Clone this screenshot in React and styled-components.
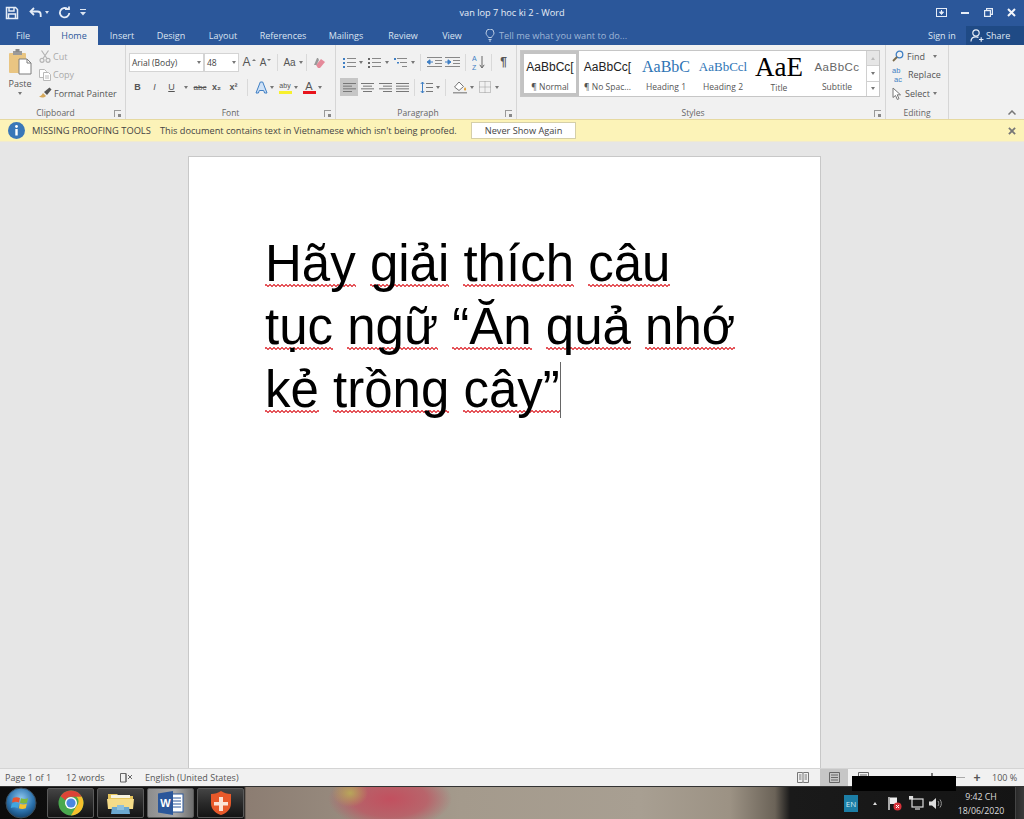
import styled, { createGlobalStyle } from "styled-components";

const UI_FONT = `"Open Sans", "Noto Sans", sans-serif`;

const colors = {
  blue: "#2b579a",
  darkBlue: "#1f4a85",
  ribbon: "#f1f1f1",
  line: "#d6d6d6",
  text: "#555",
  icon: "#6a6a6a",
  canvas: "#e6e6e6",
  bar: "#fcf3b8",
  squiggle: "#e5575c",
};

const GlobalStyle = createGlobalStyle`
  html, body {
    margin: 0;
    padding: 0;
    height: 100%;
    overflow: hidden;
  }
  #root {
    height: 100%;
  }
  * {
    box-sizing: border-box;
  }
`;

const Screen = styled.div`
  position: relative;
  width: 1024px;
  height: 819px;
  display: flex;
  flex-direction: column;
  font-family: ${UI_FONT};
  font-size: 9px;
  color: ${colors.text};
  overflow: hidden;
`;

/* title bar + tabs */
const Head = styled.header`
  background: ${colors.blue};
  color: #dfe7f3;
  height: 45px;
  display: flex;
  flex-direction: column;
  flex: none;
`;

const TitleRow = styled.div`
  height: 25px;
  display: flex;
  align-items: center;
  padding-left: 5px;
`;

const Qat = styled.div`
  display: flex;
  align-items: center;
  width: 447px;
`;

const QatGap = styled.span`
  width: ${(p) => p.$w}px;
  flex: none;
`;

const DocTitle = styled.div`
  width: 120px;
  text-align: center;
  font-size: 9.2px;
  color: #e8eef7;
  white-space: nowrap;
`;

const WinControls = styled.div`
  display: flex;
  align-items: center;
  margin-left: auto;
  margin-right: 1px;
`;

const MinimizeBar = styled.span`
  display: block;
  width: 8px;
  height: 2px;
  background: #e6edf7;
`;

const TabRow = styled.div`
  height: 20px;
  display: flex;
  align-items: flex-end;
  font-size: 9px;
`;

const Tab = styled.div`
  height: 19px;
  width: ${(p) => p.$w}px;
  flex: none;
  padding-right: ${(p) => p.$pr || 0}px;
  display: flex;
  align-items: center;
  justify-content: center;
  color: ${(p) => (p.$active ? colors.blue : "#dbe4f1")};
  background: ${(p) => (p.$active ? colors.ribbon : "transparent")};
`;

const TellMe = styled.div`
  display: flex;
  align-items: center;
  gap: 4px;
  color: #9fb6d6;
  font-size: 9.2px;
  height: 19px;
  margin-left: 11px;
  width: 443px;
`;

const SignIn = styled.div`
  height: 19px;
  width: 38px;
  display: flex;
  align-items: center;
`;

const ShareButton = styled.div`
  height: 19px;
  flex: 1;
  display: flex;
  align-items: center;
  gap: 2px;
  padding-left: 4px;
  background: ${colors.darkBlue};
`;

/* ribbon */
const Ribbon = styled.section`
  height: 74px;
  flex: none;
  display: flex;
  background: ${colors.ribbon};
  position: relative;
`;

const Group = styled.div`
  width: ${(p) => p.$w}px;
  flex: none;
  height: 74px;
  display: flex;
  flex-direction: column;
  border-right: 1px solid ${colors.line};
  position: relative;
`;

const GroupBody = styled.div`
  height: 61px;
  display: flex;
  padding-left: ${(p) => p.$pad || 0}px;
  padding-top: ${(p) => p.$top ?? 3}px;
`;

const GroupLabel = styled.div`
  height: 13px;
  text-align: center;
  line-height: 13px;
  color: #666;
  font-size: 8.5px;
  padding-right: ${(p) => p.$shift || 0}px;
`;

const Launcher = styled.div`
  position: absolute;
  right: 4px;
  bottom: 2px;
  width: 7px;
  height: 7px;
  border-left: 1px solid #999;
  border-top: 1px solid #999;
  &::after {
    content: "";
    position: absolute;
    right: 0;
    bottom: 0;
    width: 3px;
    height: 3px;
    background: #888;
  }
`;

const PasteButton = styled.div`
  width: 36px;
  margin-left: 1px;
  display: flex;
  flex-direction: column;
  align-items: center;
  gap: 2px;
  padding-top: 2px;
`;

const ClipList = styled.div`
  display: flex;
  flex-direction: column;
  padding-left: 1px;
`;

const ClipItem = styled.div`
  height: 18.5px;
  display: flex;
  align-items: center;
  gap: 2px;
  white-space: nowrap;
  color: ${(p) => (p.$off ? "#aaa" : colors.text)};
`;

const ToolStack = styled.div`
  display: flex;
  flex-direction: column;
  gap: 5px;
  padding-top: 4px;
`;

const ToolRow = styled.div`
  height: ${(p) => p.$h || 20}px;
  display: flex;
  align-items: center;
`;

const Tool = styled.div`
  width: ${(p) => p.$w || 17}px;
  height: 18px;
  flex: none;
  display: flex;
  align-items: center;
  justify-content: center;
  background: ${(p) => (p.$on ? "#c6c6c6" : "transparent")};
  color: ${colors.text};
  font-family: "Liberation Sans", sans-serif;
  font-size: ${(p) => p.$size || 9}px;
  font-weight: ${(p) => (p.$bold ? 700 : 400)};
  font-style: ${(p) => (p.$italic ? "italic" : "normal")};
  text-decoration: ${(p) => p.$deco || "none"};
`;

const Tick = styled.i`
  display: block;
  width: 0;
  margin: -5px 0 0 1px;
  border: 2px solid transparent;
  border-top: 0;
  border-bottom: 2.5px solid #777;
  transform: ${(p) => (p.$down ? "rotate(180deg)" : "none")};
`;

const SwatchTool = styled.div`
  width: 16px;
  height: 18px;
  flex: none;
  margin-left: 2px;
  display: flex;
  flex-direction: column;
  align-items: center;
  justify-content: center;
  font-family: "Liberation Sans", sans-serif;
  font-size: ${(p) => p.$size || 11}px;
  line-height: 10px;
  color: #555;
  &::after {
    content: "";
    display: block;
    width: 13px;
    height: 3px;
    background: ${(p) => p.$bar};
  }
`;

const Caret = styled.i`
  display: block;
  width: ${(p) => p.$w || 6}px;
  flex: none;
  height: 3px;
  margin: ${(p) => p.$m || "0"};
  transform: ${(p) => (p.$up ? "rotate(180deg)" : "none")};
  &::before {
    content: "";
    display: block;
    width: 0;
    margin: 0 auto;
    border: 2.5px solid transparent;
    border-bottom: 0;
    border-top: 3px solid ${(p) => p.$color || "#777"};
  }
`;

const Sep = styled.span`
  width: 1px;
  height: 17px;
  flex: none;
  background: #d9d9d9;
  margin: 0 ${(p) => p.$m || 4}px;
`;

const Combo = styled.div`
  width: ${(p) => p.$w}px;
  height: 19px;
  flex: none;
  background: #fff;
  border: 1px solid #d4d4d4;
  margin-right: ${(p) => p.$mr || 0}px;
  display: flex;
  align-items: center;
  justify-content: space-between;
  padding: 0 1px 0 2px;
  font-size: 8.5px;
  color: #444;
`;

const Gallery = styled.div`
  width: 360px;
  height: 47px;
  margin-left: 3px;
  display: flex;
  background: #fff;
  border: 1px solid #c6c6c6;
`;

const StyleCard = styled.div`
  width: ${(p) => p.$w}px;
  flex: none;
  height: 100%;
  display: flex;
  flex-direction: column;
  align-items: center;
  border: ${(p) => (p.$sel ? "3px solid #c3c3c3" : "3px solid transparent")};
`;

const Preview = styled.div`
  height: 27px;
  width: 100%;
  display: flex;
  align-items: center;
  justify-content: center;
  white-space: nowrap;
  font-family: ${(p) => (p.$serif ? `"Liberation Serif", serif` : `"Liberation Sans", sans-serif`)};
  font-size: ${(p) => p.$size}px;
  color: ${(p) => p.$color || "#222"};
  letter-spacing: ${(p) => p.$track || 0}px;
`;

const CardLabel = styled.div`
  font-size: 8.5px;
  line-height: 13px;
  white-space: nowrap;
  color: #555;
`;

const GalleryScroll = styled.div`
  flex: 1;
  display: flex;
  flex-direction: column;
  border-left: 1px solid #d0d0d0;
`;

const ScrollCell = styled.div`
  flex: 1;
  display: flex;
  align-items: center;
  justify-content: center;
  background: ${(p) => (p.$off ? "#e6e6e6" : "#fff")};
  & + & {
    border-top: 1px solid #d0d0d0;
  }
`;

const EditList = styled.div`
  display: flex;
  flex-direction: column;
  padding-left: 6px;
`;

const EditItem = styled.div`
  height: 18.5px;
  display: flex;
  align-items: center;
  gap: ${(p) => p.$gap ?? 3}px;
  white-space: nowrap;
  color: #555;
`;

const CollapseArrow = styled.div`
  position: absolute;
  right: 6px;
  bottom: 4px;
  width: 12px;
  display: flex;
  justify-content: center;
`;

/* message bar */
const MessageBar = styled.div`
  height: 23px;
  flex: none;
  background: ${colors.bar};
  border-top: 1px solid #e6d9a0;
  border-bottom: 1px solid #f0ead0;
  display: flex;
  align-items: center;
  padding-left: 8px;
  color: #444;
  font-size: 9.2px;
  white-space: nowrap;
`;

const BarTitle = styled.span`
  margin-left: 7px;
  width: 128px;
  font-size: 9.3px;
`;

const BarText = styled.span`
  width: 311px;
`;

const BarButton = styled.div`
  width: 105px;
  height: 17px;
  background: #fff;
  border: 1px solid #d5cfa8;
  display: flex;
  align-items: center;
  justify-content: center;
`;

const BarClose = styled.div`
  margin-left: auto;
  margin-right: 8px;
  display: flex;
`;

/* document */
const Canvas = styled.main`
  flex: 1;
  min-height: 0;
  background: ${colors.canvas};
  overflow: hidden;
  padding: 14px 15px 0 0;
  display: flex;
  justify-content: center;
  border-bottom: 1px solid #d4d4d4;
`;

const Page = styled.article`
  width: 633px;
  height: 900px;
  flex: none;
  background: #fff;
  border: 1px solid #c8c8c8;
  padding: 75px 76px 0 76px;
`;

const Body = styled.p`
  margin: 0;
  font-family: "Liberation Sans", Arial, sans-serif;
  font-size: 51px;
  line-height: 63px;
  color: #000;
`;

/* spelling squiggle: zigzag repeated under the word */
const Word = styled.span`
  background-image:
    linear-gradient(45deg, transparent 38%, ${colors.squiggle} 38%, ${colors.squiggle} 62%, transparent 62%),
    linear-gradient(-45deg, transparent 38%, ${colors.squiggle} 38%, ${colors.squiggle} 62%, transparent 62%);
  background-size: 4px 3px;
  background-position: 0 calc(100% - 5px), 2px calc(100% - 5px);
  background-repeat: repeat-x;
`;

const TextCursor = styled.span`
  display: inline-block;
  width: 1px;
  height: 56px;
  background: #666;
  vertical-align: -11px;
`;

/* status bar */
const StatusBar = styled.footer`
  height: 18px;
  flex: none;
  background: ${colors.ribbon};
  display: flex;
  align-items: center;
  padding-left: 5px;
  font-size: 9px;
  color: #555;
  border-bottom: 1px solid #333;
`;

const StatusItem = styled.span`
  width: ${(p) => p.$w}px;
  flex: none;
  white-space: nowrap;
  display: flex;
  align-items: center;
`;

const ViewButtons = styled.div`
  margin-left: auto;
  display: flex;
  align-items: center;
  height: 100%;
`;

const ViewButton = styled.div`
  width: ${(p) => p.$w || 18}px;
  height: 100%;
  display: flex;
  align-items: center;
  justify-content: center;
  background: ${(p) => (p.$on ? "#c6c6c6" : "transparent")};
`;

const Zoom = styled.div`
  display: flex;
  align-items: center;
  margin: 0 9px 0 5px;
`;

const ZoomTrack = styled.div`
  position: relative;
  width: 89px;
  height: 1px;
  background: #aaa;
  margin-right: 6px;
  &::after {
    content: "";
    position: absolute;
    left: 55px;
    top: -4px;
    width: 2px;
    height: 9px;
    background: #777;
  }
`;

const Redaction = styled.div`
  position: absolute;
  left: 852px;
  top: 776px;
  width: 104px;
  height: 15px;
  background: #000;
`;

/* taskbar */
const Taskbar = styled.nav`
  height: 32px;
  flex: none;
  display: flex;
  align-items: center;
  background:
    radial-gradient(ellipse 18px 14px at 350px 6px, #b8a65a 0, transparent 100%),
    radial-gradient(ellipse 62px 30px at 390px 12px, #c2505f 0, rgba(194, 80, 95, 0.7) 60%, transparent 100%),
    linear-gradient(90deg, #0c0c0c 0, #141414 244px, #8c7d72 246px, #a49a8c 460px, #a89f92 640px, #9c9284 730px, #6b6358 775px, #1a1a1a 790px, #141414 100%);
`;

const StartSlot = styled.div`
  width: 47px;
  height: 100%;
  display: flex;
  align-items: center;
  justify-content: center;
  padding-right: 5px;
  flex: none;
`;

const TaskButton = styled.div`
  width: 47px;
  height: 30px;
  flex: none;
  margin-right: 3px;
  border: 1px solid #5a5a5a;
  border-radius: 2px;
  display: flex;
  align-items: center;
  justify-content: center;
  background: ${(p) =>
    p.$active
      ? "linear-gradient(90deg, #8d8d8d, #a8a8a8 60%, #6f6f6f)"
      : "linear-gradient(180deg, #444 0, #2a2a2a 50%, #141414 100%)"};
`;

const Tray = styled.div`
  margin-left: auto;
  display: flex;
  align-items: center;
  height: 100%;
`;

const LangBadge = styled.div`
  width: 14px;
  height: 17px;
  margin-right: 11px;
  background: #1c7ea6;
  color: #cfeaf5;
  font-size: 8px;
  display: flex;
  align-items: center;
  justify-content: center;
`;

const TrayIcon = styled.div`
  width: ${(p) => p.$w}px;
  flex: none;
  display: flex;
  align-items: center;
  justify-content: center;
`;

const Clock = styled.div`
  width: 64px;
  margin-left: 3px;
  padding-top: 1px;
  text-align: center;
  color: #dcdcdc;
  font-size: 8.8px;
  line-height: 14px;
`;

const ShowDesktop = styled.div`
  width: 9px;
  height: 100%;
  margin-left: 2px;
  background: linear-gradient(90deg, #2a2a2a, #3a3a3a);
  border-left: 1px solid #444;
`;

const SaveIcon = () => (
  <svg width="14" height="14" viewBox="0 0 14 14" fill="none" stroke="#e6edf7" strokeWidth="1.5">
    <path d="M1.5 1.5h9l2 2v9h-11z" />
    <path d="M4 1.5v3.5h5V1.5M3.5 12.5V8h7v4.5" />
  </svg>
);

const UndoIcon = () => (
  <svg width="14" height="12" viewBox="0 0 14 12" fill="none" stroke="#e6edf7" strokeWidth="1.8">
    <path d="M5 1 1.5 4.5 5 8" />
    <path d="M2 4.5h6.5a3.2 3.2 0 0 1 3.2 3.2V10" />
  </svg>
);

const RedoIcon = () => (
  <svg width="13" height="13" viewBox="0 0 13 13" fill="none" stroke="#e6edf7" strokeWidth="1.8">
    <path d="M9.5 3A4.7 4.7 0 1 0 11.3 7" />
    <path d="M7 3h4V.5" />
  </svg>
);

const QatMore = () => (
  <svg width="6" height="7" viewBox="0 0 6 7" fill="#dbe4f1">
    <path d="M0 0h6v1H0zM0 3h6L3 6.5z" />
  </svg>
);

const RibbonDisplayIcon = () => (
  <svg width="11" height="9" viewBox="0 0 11 9" fill="none" stroke="#e6edf7">
    <rect x=".5" y=".5" width="10" height="8" />
    <path d="M5.5 2v2M3.5 4h4L5.500 6.500z" fill="#e6edf7" />
  </svg>
);

const RestoreIcon = () => (
  <svg width="9" height="9" viewBox="0 0 9 9" fill="none" stroke="#e6edf7" strokeWidth="1.2">
    <rect x=".6" y="2.6" width="5.8" height="5.8" />
    <path d="M2.6 2.5V.6h5.8v5.8H6.500" />
  </svg>
);

const CloseIcon = ({ color = "#f2f5fa", size = 9, width = 2 }) => (
  <svg width={size} height={size} viewBox="0 0 9 9" stroke={color} strokeWidth={width}>
    <path d="M1 1l7 7M8 1 1 8" />
  </svg>
);

const BulbIcon = () => (
  <svg width="10" height="13" viewBox="0 0 10 13" fill="none" stroke="#b9cbe3">
    <path d="M3.4 8.5C3 6.8 1 6.2 1 4a4 4 0 0 1 8 0c0 2.2-2 2.8-2.4 4.5z" />
    <path d="M3.5 10.5h3M4 12h2" />
  </svg>
);

const PersonIcon = () => (
  <svg width="14" height="13" viewBox="0 0 14 13" fill="none" stroke="#e6edf7" strokeWidth="1.2">
    <circle cx="6" cy="4" r="3.2" />
    <path d="M1 12.5c0-3 2-4.6 5-4.6 1 0 1.8.2 2.5.5M9 10.5h4.5M11.2 8.2v4.6" />
  </svg>
);

const PasteIcon = () => (
  <svg width="25" height="26" viewBox="0 0 25 26">
    <rect x="1" y="4" width="17" height="20" rx="1" fill="#e9c582" />
    <rect x="5" y="2" width="9" height="4" fill="#9a9a9a" />
    <rect x="7.5" y="0" width="4" height="3" fill="#8a8a8a" />
    <path d="M11 10h8l4 4v11H11z" fill="#fff" stroke="#7d7d7d" />
    <path d="M19 10v4h4" fill="none" stroke="#7d7d7d" />
  </svg>
);

const CutIcon = () => (
  <svg width="12" height="13" viewBox="0 0 12 13" fill="none" stroke="#b4b4b4" strokeWidth="1.2">
    <circle cx="3" cy="10.3" r="2" />
    <circle cx="9" cy="10.3" r="2" />
    <path d="M4 8.5 9.5.5M8 8.5 2.5.5" />
  </svg>
);

const CopyIcon = () => (
  <svg width="12" height="12" viewBox="0 0 12 12" fill="#fff" stroke="#b8b8b8">
    <path d="M.5.5h5l2 2v6h-7z" />
    <path d="M4.5 3.5h5l2 2v6h-7z" />
    <path d="M6 7h4M6 9h4" />
  </svg>
);

const PainterIcon = () => (
  <svg width="13" height="12" viewBox="0 0 13 12">
    <path d="M0 9.5C2 9 3 8 4 6l3 3c-2 1.5-4 2.5-7 .5z" fill="#d6a85a" />
    <path d="M5 5l3 3 4.5-5.5L10.5.5z" fill="#555" />
  </svg>
);

const ClearIcon = () => (
  <svg width="13" height="13" viewBox="0 0 13 13">
    <path d="M3 9l5-6 4 3-5 6H5z" fill="#e58a9a" />
    <path d="M1 9 4 2h1l1 2-2.500 5z" fill="#999" />
  </svg>
);

const EffectsIcon = () => (
  <svg width="13" height="13" viewBox="0 0 13 13" fill="#cfe2f7" stroke="#3f7fc4">
    <path d="M1 12 5.3 1h2.4L12 12H9.6l-.9-2.500H4.300L3.400 12z" />
  </svg>
);

const LinesIcon = ({ rows, color = "#777", w = 13 }) => (
  <svg width={w} height="11" viewBox={`0 0 ${w} 11`} stroke={color}>
    {rows.map(([a, b], i) => (
      <line key={i} x1={a} x2={b} y1={1.5 + i * (8 / (rows.length - 1))} y2={1.5 + i * (8 / (rows.length - 1))} />
    ))}
  </svg>
);

const BulletIcon = ({ mark = "#3f7fc4" }) => (
  <svg width="13" height="11" viewBox="0 0 13 11">
    {[1, 5, 9].map((y) => (
      <g key={y}>
        <rect x="0" y={y} width="2" height="2" fill={mark} />
        <line x1="4" x2="13" y1={y + 0.5} y2={y + 0.5} stroke="#888" />
      </g>
    ))}
  </svg>
);

const MultiIcon = () => (
  <svg width="13" height="11" viewBox="0 0 13 11">
    <rect x="0" y="1" width="2" height="2" fill="#3f7fc4" />
    <line x1="3" x2="13" y1="1.500" y2="1.500" stroke="#888" />
    <rect x="3" y="5" width="2" height="1.500" fill="#3f7fc4" />
    <line x1="6" x2="13" y1="5.500" y2="5.500" stroke="#888" />
    <line x1="8" x2="13" y1="9.500" y2="9.500" stroke="#888" />
  </svg>
);

const IndentIcon = ({ flip }) => (
  <svg width="15" height="11" viewBox="0 0 15 11" stroke="#888">
    <path d="M0 .5h15M8 3.500h7M8 6.500h7M0 9.500h15" />
    <path d={flip ? "M0 5h4M3 2.800 6 5 3 7.200z" : "M6 5H2M3 2.800 0 5l3 2.200z"} fill="#3f7fc4" stroke="#3f7fc4" />
  </svg>
);

const SortIcon = () => (
  <svg width="14" height="17" viewBox="0 0 14 17">
    <text x="0" y="7" fontFamily="Liberation Sans" fontSize="7" fill="#3f7fc4">A</text>
    <text x="0" y="15.500" fontFamily="Liberation Sans" fontSize="7" fill="#3f7fc4">Z</text>
    <path d="M10 2v11M7.800 10.800 10 14l2.200-3.200" fill="none" stroke="#666" />
  </svg>
);

const LineSpacingIcon = () => (
  <svg width="13" height="13" viewBox="0 0 13 13" stroke="#777">
    <path d="M6 2.500h7M6 6.500h7M6 10.500h7" />
    <path d="M2.500 1v11M.8 3 2.500 1l1.700 2M.8 10l1.700 2 1.700-2" fill="none" stroke="#3f7fc4" />
  </svg>
);

const ShadingIcon = () => (
  <svg width="14" height="13" viewBox="0 0 14 13">
    <path d="M6 1 1.500 6 6 9.500 10.500 5.500z" fill="#fff" stroke="#777" />
    <path d="M12 6c1 1.500 1.500 2 1 3s-2 .5-2-.5.500-1.500 1-2.500z" fill="#e0a33c" />
    <rect x="0" y="11" width="14" height="1.500" fill="#999" />
  </svg>
);

const BordersIcon = () => (
  <svg width="12" height="12" viewBox="0 0 12 12" fill="none" stroke="#999" strokeDasharray="1 1">
    <rect x=".5" y=".5" width="11" height="11" />
    <path d="M6 .5v11M.5 6h11" />
  </svg>
);

const FindIcon = () => (
  <svg width="12" height="12" viewBox="0 0 12 12" fill="none">
    <circle cx="7.500" cy="4.500" r="3.300" stroke="#3f7fc4" strokeWidth="1.300" />
    <path d="M5 7 1 11" stroke="#7a6a4a" strokeWidth="1.800" />
  </svg>
);

const ReplaceIcon = () => (
  <svg width="14" height="17" viewBox="0 0 14 17" fontFamily="Liberation Sans" fontSize="7.500">
    <text x="0" y="7" fill="#3f7fc4">ab</text>
    <text x="2" y="16" fill="#3f7fc4">ac</text>
  </svg>
);

const SelectIcon = () => (
  <svg width="10" height="13" viewBox="0 0 10 13" fill="#fff" stroke="#777">
    <path d="M1 1v9.500l2.500-2 1.800 4 1.700-.8-1.800-3.900h3.300z" />
  </svg>
);

const InfoIcon = () => (
  <svg width="17" height="17" viewBox="0 0 17 17">
    <circle cx="8.500" cy="8.500" r="8.500" fill="#3a77b8" />
    <rect x="7.300" y="7" width="2.400" height="6.500" fill="#fff" />
    <circle cx="8.500" cy="4.500" r="1.400" fill="#fff" />
  </svg>
);

const ProofIcon = () => (
  <svg width="13" height="11" viewBox="0 0 13 11" fill="none" stroke="#666">
    <path d="M6 1.500H.5v8.500H6zM6 1.500V10" />
    <path d="M8 3l4 4M12 3 8 7" />
  </svg>
);

const ReadIcon = () => (
  <svg width="12" height="11" viewBox="0 0 12 11" fill="none" stroke="#777">
    <path d="M.5.500h5l.5 1 .5-1h5v10h-5L6 9.500l-.5 1h-5zM6 1.500v8" />
    <path d="M2 3h2.500M2 5h2.500M2 7h2.500M7.500 3H10M7.500 5H10M7.500 7H10" />
  </svg>
);

const PrintIcon = () => (
  <svg width="11" height="11" viewBox="0 0 11 11" fill="none" stroke="#666">
    <path d="M.5.500h10v10H.5zM2 3h7M2 5.500h7M2 8h7" />
  </svg>
);

const WinOrb = () => (
  <svg width="32" height="32" viewBox="0 0 32 32">
    <defs>
      <radialGradient id="orb" cx="50%" cy="35%" r="70%">
        <stop offset="0" stopColor="#8fc8ee" />
        <stop offset="0.6" stopColor="#2c72ad" />
        <stop offset="1" stopColor="#10395f" />
      </radialGradient>
    </defs>
    <circle cx="16" cy="16" r="15" fill="url(#orb)" stroke="#3a4b58" />
    <path d="M8 11c2.500-1 4.500-1 7 0l-1 4.500c-2.500-1-4.500-1-7 0z" fill="#e8532f" />
    <path d="M16 11.300c2.500 1 4.500 1 7 0l-1 4.500c-2.500 1-4.500 1-7 0z" fill="#7fba3a" />
    <path d="M6.800 16.500c2.500-1 4.500-1 7 0l-1 4.500c-2.500-1-4.500-1-7 0z" fill="#3fa6e0" />
    <path d="M14.800 16.800c2.500 1 4.500 1 7 0l-1 4.500c-2.500 1-4.500 1-7 0z" fill="#f5c22f" />
  </svg>
);

const ChromeIcon = () => (
  <svg width="26" height="26" viewBox="0 0 26 26">
    <circle cx="13" cy="13" r="12.500" fill="#4aa94f" />
    <path d="M13 .5a12.500 12.500 0 0 1 10.800 6.300H13a6.200 6.200 0 0 0-5.600 3.400L2.600 6.300A12.500 12.500 0 0 1 13 .5z" fill="#dc4437" />
    <path d="M23.800 6.800A12.500 12.500 0 0 1 13 25.500l5.400-9.300a6.200 6.200 0 0 0 0-9.400z" fill="#f6c02d" />
    <circle cx="13" cy="13" r="6" fill="#fff" />
    <circle cx="13" cy="13" r="4.600" fill="#4a87e0" />
  </svg>
);

const ExplorerIcon = () => (
  <svg width="27" height="24" viewBox="0 0 27 24">
    <path d="M1 3h9l2 2h14v11H1z" fill="#e6c55c" />
    <rect x="4" y="4" width="19" height="3" fill="#f7f3e0" />
    <path d="M0 8h27l-1 10H1z" fill="#f5dc88" />
    <path d="M5 16h17l1 7H4z" fill="#6ba8d0" />
    <rect x="10" y="14" width="7" height="5" fill="#8ec0dc" />
  </svg>
);

const WordIcon = () => (
  <svg width="26" height="26" viewBox="0 0 26 26">
    <rect x="12" y="4" width="13" height="18" fill="#fff" stroke="#2b579a" />
    <path d="M14 8h9M14 11h9M14 14h9M14 17h9" stroke="#2b579a" />
    <path d="M0 3.500 15 1v24L0 22.500z" fill="#2b579a" />
    <text x="7.500" y="17" textAnchor="middle" fontFamily="Liberation Sans" fontWeight="700" fontSize="11" fill="#fff">W</text>
  </svg>
);

const ShieldIcon = () => (
  <svg width="22" height="26" viewBox="0 0 22 26">
    <path d="M11 1c3 2 6 3 10 3v9c0 6-4 10-10 12C5 23 1 19 1 13V4c4 0 7-1 10-3z" fill="#e8592a" />
    <path d="M9 7h4v5h5v3.500h-5V21H9v-5.500H4V12h5z" fill="#fbe3d6" />
  </svg>
);

const FlagIcon = () => (
  <svg width="15" height="15" viewBox="0 0 15 15">
    <path d="M2 1v13" stroke="#ddd" strokeWidth="1.500" />
    <path d="M3 1.500h7v6.500H3z" fill="#eee" />
    <circle cx="10.500" cy="10.500" r="4" fill="#d8323a" />
    <path d="M9 9l3 3M12 9l-3 3" stroke="#fff" />
  </svg>
);

const NetworkIcon = () => (
  <svg width="15" height="14" viewBox="0 0 15 14" fill="none" stroke="#ddd" strokeWidth="1.200">
    <rect x="3" y="3" width="11" height="8" />
    <path d="M6 13h5" />
    <rect x="0" y="0" width="3.500" height="3" fill="#ddd" />
  </svg>
);

const SpeakerIcon = () => (
  <svg width="14" height="13" viewBox="0 0 14 13" fill="none">
    <path d="M0 4.500h3L7 1v11L3 8.500H0z" fill="#ddd" />
    <path d="M9 4c1 1.500 1 3.500 0 5M11 2.500c1.800 2.500 1.800 5.500 0 8" stroke="#999" />
  </svg>
);

const CollapseIcon = () => (
  <svg width="8" height="5" viewBox="0 0 8 5" fill="none" stroke="#777" strokeWidth="1.500">
    <path d="M.5 4.500 4 1l3.500 3.500" />
  </svg>
);

const tabs = [
  ["File", 50, false, 4],
  ["Home", 48, true],
  ["Insert", 48],
  ["Design", 50],
  ["Layout", 54],
  ["References", 66],
  ["Mailings", 60],
  ["Review", 54],
  ["View", 44],
];

const words = "Hãy giải thích câu tục ngữ “Ăn quả nhớ kẻ trồng cây”".split(" ");

const alignLeft = [[0, 13], [0, 9], [0, 13], [0, 9]];
const alignCenter = [[0, 13], [2, 11], [0, 13], [2, 11]];
const alignRight = [[0, 13], [4, 13], [0, 13], [4, 13]];
const alignFull = [[0, 13], [0, 13], [0, 13], [0, 13]];

export default function App() {
  return (
    <Screen>
      <GlobalStyle />
      <Head>
        <TitleRow>
          <Qat>
            <Tool $w={14}><SaveIcon /></Tool>
            <QatGap $w={9} />
            <Tool $w={16}><UndoIcon /></Tool>
            <Caret $color="#dbe4f1" />
            <QatGap $w={6} />
            <Tool $w={16}><RedoIcon /></Tool>
            <QatGap $w={5} />
            <Tool $w={12}><QatMore /></Tool>
          </Qat>
          <DocTitle>van lop 7 hoc ki 2 - Word</DocTitle>
          <WinControls>
            <Tool $w={23}><RibbonDisplayIcon /></Tool>
            <Tool $w={23}><MinimizeBar /></Tool>
            <Tool $w={24}><RestoreIcon /></Tool>
            <Tool $w={23}><CloseIcon /></Tool>
          </WinControls>
        </TitleRow>
        <TabRow>
          {tabs.map(([name, w, active, pr]) => (
            <Tab key={name} $w={w} $active={active} $pr={pr}>{name}</Tab>
          ))}
          <TellMe><BulbIcon />Tell me what you want to do...</TellMe>
          <SignIn>Sign in</SignIn>
          <ShareButton><PersonIcon />Share</ShareButton>
        </TabRow>
      </Head>

      <Ribbon>
        <Group $w={126}>
          <GroupBody $pad={1} $top={2}>
            <PasteButton>
              <PasteIcon />
              <span>Paste</span>
              <Caret />
            </PasteButton>
            <ClipList>
              <ClipItem $off><CutIcon />Cut</ClipItem>
              <ClipItem $off><CopyIcon />Copy</ClipItem>
              <ClipItem><PainterIcon />Format Painter</ClipItem>
            </ClipList>
          </GroupBody>
          <GroupLabel $shift={14}>Clipboard</GroupLabel>
          <Launcher />
        </Group>

        <Group $w={210}>
          <GroupBody $pad={3}>
            <ToolStack>
              <ToolRow>
                <Combo $w={75}>Arial (Body)<Caret /></Combo>
                <Combo $w={35} $mr={2}>48<Caret /></Combo>
                <Tool $w={16} $size={12}>A<Tick /></Tool>
                <Tool $w={17} $size={10}>A<Tick $down /></Tool>
                <Sep $m={3} />
                <Tool $w={17} $size={10}>Aa</Tool>
                <Caret $w={5} />
                <Sep $m={3} />
                <Tool $w={18}><ClearIcon /></Tool>
              </ToolRow>
              <ToolRow>
                <Tool $bold>B</Tool>
                <Tool $italic>I</Tool>
                <Tool $deco="underline">U</Tool>
                <Caret $w={12} />
                <Tool $w={16} $size={8} $deco="line-through">abc</Tool>
                <Tool $w={17} $bold>x₂</Tool>
                <Tool $w={17} $bold>x²</Tool>
                <Sep $m={5} />
                <Tool $w={16}><EffectsIcon /></Tool>
                <Caret />
                <SwatchTool $size={7} $bar="#f7f02d">aby</SwatchTool>
                <Caret />
                <SwatchTool $bar="#e8141c">A</SwatchTool>
                <Caret />
              </ToolRow>
            </ToolStack>
          </GroupBody>
          <GroupLabel>Font</GroupLabel>
          <Launcher />
        </Group>

        <Group $w={181}>
          <GroupBody $pad={4}>
            <ToolStack>
              <ToolRow>
                <Tool $w={18}><BulletIcon /></Tool>
                <Caret />
                <Tool $w={20}><BulletIcon mark="#666" /></Tool>
                <Caret />
                <Tool $w={20}><MultiIcon /></Tool>
                <Caret />
                <Sep $m={4} />
                <Tool $w={18}><IndentIcon /></Tool>
                <Tool $w={18}><IndentIcon flip /></Tool>
                <Sep $m={4} />
                <Tool $w={17}><SortIcon /></Tool>
                <Sep $m={4} />
                <Tool $w={15} $size={12} $bold>¶</Tool>
              </ToolRow>
              <ToolRow>
                <Tool $w={18} $on><LinesIcon rows={alignLeft} /></Tool>
                <Tool $w={18}><LinesIcon rows={alignCenter} /></Tool>
                <Tool $w={18}><LinesIcon rows={alignRight} /></Tool>
                <Tool $w={17}><LinesIcon rows={alignFull} /></Tool>
                <Sep $m={3} />
                <Tool $w={17}><LineSpacingIcon /></Tool>
                <Caret />
                <Sep $m={4} />
                <Tool $w={19}><ShadingIcon /></Tool>
                <Caret />
                <Tool $w={19}><BordersIcon /></Tool>
                <Caret />
              </ToolRow>
            </ToolStack>
          </GroupBody>
          <GroupLabel $shift={16}>Paragraph</GroupLabel>
          <Launcher />
        </Group>

        <Group $w={369}>
          <GroupBody $top={5}>
            <Gallery>
              <StyleCard $w={58} $sel>
                <Preview $size={12}>AaBbCc[</Preview>
                <CardLabel>¶ Normal</CardLabel>
              </StyleCard>
              <StyleCard $w={57}>
                <Preview $size={12}>AaBbCc[</Preview>
                <CardLabel>¶ No Spac...</CardLabel>
              </StyleCard>
              <StyleCard $w={60}>
                <Preview $serif $size={16} $color="#2e74b5">AaBbC</Preview>
                <CardLabel>Heading 1</CardLabel>
              </StyleCard>
              <StyleCard $w={54}>
                <Preview $serif $size={13} $color="#2e74b5">AaBbCcl</Preview>
                <CardLabel>Heading 2</CardLabel>
              </StyleCard>
              <StyleCard $w={58}>
                <Preview $serif $size={27} $color="#000">AaE</Preview>
                <CardLabel>Title</CardLabel>
              </StyleCard>
              <StyleCard $w={58}>
                <Preview $size={11.5} $color="#666" $track={0.5}>AaBbCc</Preview>
                <CardLabel>Subtitle</CardLabel>
              </StyleCard>
              <GalleryScroll>
                <ScrollCell $off><Caret $up $color="#bbb" /></ScrollCell>
                <ScrollCell><Caret /></ScrollCell>
                <ScrollCell><Caret /></ScrollCell>
              </GalleryScroll>
            </Gallery>
          </GroupBody>
          <GroupLabel $shift={16}>Styles</GroupLabel>
          <Launcher />
        </Group>

        <Group $w={63}>
          <GroupBody $top={2}>
            <EditList>
              <EditItem><FindIcon />Find<Caret $m="0 0 0 4px" /></EditItem>
              <EditItem $gap={2}><ReplaceIcon />Replace</EditItem>
              <EditItem><SelectIcon />Select<Caret $w={5} /></EditItem>
            </EditList>
          </GroupBody>
          <GroupLabel>Editing</GroupLabel>
        </Group>

        <CollapseArrow><CollapseIcon /></CollapseArrow>
      </Ribbon>

      <MessageBar>
        <InfoIcon />
        <BarTitle>MISSING PROOFING TOOLS</BarTitle>
        <BarText>This document contains text in Vietnamese which isn't being proofed.</BarText>
        <BarButton>Never Show Again</BarButton>
        <BarClose><CloseIcon color="#777" size={8} /></BarClose>
      </MessageBar>

      <Canvas>
        <Page>
          <Body>
            {words.map((w, i) => (
              <span key={i}>
                <Word>{w}</Word>{i < words.length - 1 ? " " : ""}
              </span>
            ))}
            <TextCursor />
          </Body>
        </Page>
      </Canvas>

      <StatusBar>
        <StatusItem $w={61}>Page 1 of 1</StatusItem>
        <StatusItem $w={54}>12 words</StatusItem>
        <StatusItem $w={25}><ProofIcon /></StatusItem>
        <StatusItem $w={100}>English (United States)</StatusItem>
        <ViewButtons>
          <ViewButton $w={18}><ReadIcon /></ViewButton>
          <ViewButton $w={8} />
          <ViewButton $w={28} $on><PrintIcon /></ViewButton>
          <ViewButton $w={7} />
          <ViewButton $w={16}><PrintIcon /></ViewButton>
        </ViewButtons>
        <Zoom>
          <ZoomTrack />
          <Tool $w={12} $size={12} $bold>+</Tool>
        </Zoom>
        <StatusItem $w={32}>100 %</StatusItem>
      </StatusBar>

      <Taskbar>
        <StartSlot><WinOrb /></StartSlot>
        <TaskButton><ChromeIcon /></TaskButton>
        <TaskButton><ExplorerIcon /></TaskButton>
        <TaskButton $active><WordIcon /></TaskButton>
        <TaskButton><ShieldIcon /></TaskButton>
        <Tray>
          <LangBadge>EN</LangBadge>
          <TrayIcon $w={12}><Caret $up $color="#ddd" /></TrayIcon>
          <TrayIcon $w={26}><FlagIcon /></TrayIcon>
          <TrayIcon $w={19}><NetworkIcon /></TrayIcon>
          <TrayIcon $w={20}><SpeakerIcon /></TrayIcon>
          <Clock>9:42 CH<br />18/06/2020</Clock>
          <ShowDesktop />
        </Tray>
      </Taskbar>

      <Redaction />
    </Screen>
  );
}
